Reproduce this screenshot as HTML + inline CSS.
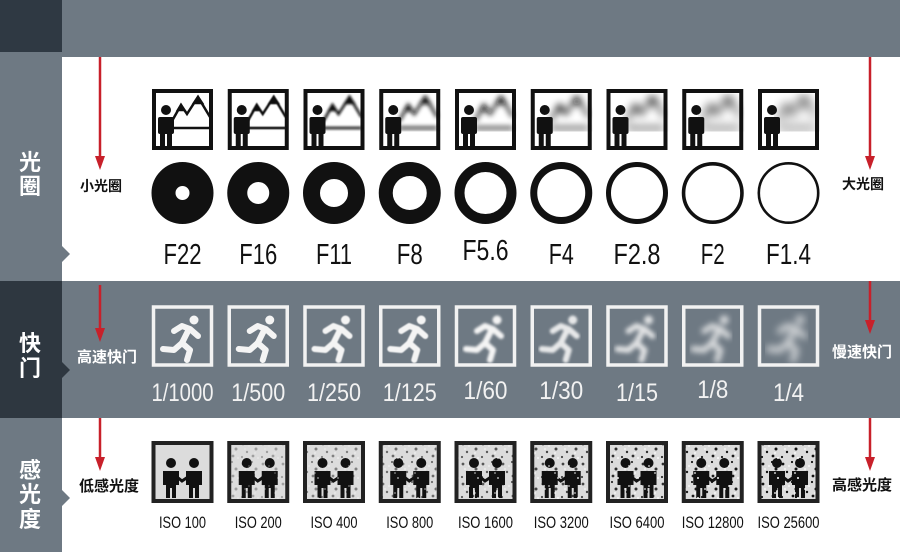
<!DOCTYPE html>
<html><head><meta charset="utf-8"><style>
html,body{margin:0;padding:0;background:#fff;}
svg{display:block}
</style></head><body>
<svg width="900" height="552" viewBox="0 0 900 552" xmlns="http://www.w3.org/2000/svg" font-family="'Liberation Sans','Noto Sans CJK SC',sans-serif">
<defs>
<filter id="b1"><feGaussianBlur stdDeviation="0.6"/></filter>
<filter id="b2"><feGaussianBlur stdDeviation="1.2"/></filter>
<filter id="b3"><feGaussianBlur stdDeviation="2"/></filter>
<filter id="b4"><feGaussianBlur stdDeviation="2.8"/></filter>
<filter id="b5"><feGaussianBlur stdDeviation="3.6"/></filter>
<filter id="b6"><feGaussianBlur stdDeviation="4.4"/></filter>
<filter id="b7"><feGaussianBlur stdDeviation="5"/></filter>
<filter id="b8"><feGaussianBlur stdDeviation="5.6"/></filter>
<g id="mtn" fill="none" stroke="#111" stroke-width="2.5">
<polyline points="20,32 29,16 35,25 46,8 58,28"/>
<polygon points="29,16 26,21 32,21" fill="#111"/>
<polygon points="46,8 42,14 50,14" fill="#111"/>
<line x1="20" y1="39" x2="58" y2="39"/>
</g>
<g id="person" fill="#111">
<circle cx="14" cy="21" r="5"/>
<rect x="6" y="28" width="16" height="17" rx="2"/>
<rect x="8" y="44" width="5" height="14"/>
<rect x="15" y="44" width="5" height="14"/>
</g>
<g id="runner" fill="none" stroke="#f4f4f4" stroke-width="6" stroke-linecap="round" stroke-linejoin="round">
<circle cx="42" cy="15" r="4.5" fill="#f4f4f4" stroke="none"/>
<polyline points="22,26 30,21 38,24 46,31"/>
<line x1="37" y1="24" x2="30" y2="38"/>
<polyline points="30,38 38,45 35,55"/>
<polyline points="30,38 22,45 11,44"/>
</g>
<g id="pair" fill="#111">
<circle cx="19" cy="22" r="5"/>
<path d="M11 30h16v14h-3v13h-4v-10h-2v10h-4v-13h-3z"/>
<circle cx="42" cy="22" r="5"/>
<path d="M34 30h16v14h-3v13h-4v-10h-2v10h-4v-13h-3z"/>
<path d="M25 36 L30 40 L36 36" stroke="#111" stroke-width="3" fill="none"/>
</g>
<pattern id="noise" width="20" height="20" patternUnits="userSpaceOnUse">
<circle cx="3" cy="4" r="1.4" fill="#111"/><circle cx="12" cy="2" r="1.1" fill="#111"/>
<circle cx="16" cy="9" r="1.5" fill="#111"/><circle cx="7" cy="12" r="1.2" fill="#111"/>
<circle cx="2" cy="17" r="1.1" fill="#111"/><circle cx="13" cy="16" r="1.4" fill="#111"/>
<circle cx="9" cy="6" r="0.9" fill="#fff"/><circle cx="18" cy="18" r="1" fill="#fff"/>
<circle cx="5" cy="9" r="0.9" fill="#fff"/><circle cx="15" cy="13" r="0.9" fill="#fff"/>
</pattern>
</defs>

<rect x="0" y="0" width="900" height="57" fill="#6e7983"/>
<rect x="0" y="0" width="62" height="52" fill="#2f3943"/>
<rect x="0" y="52" width="62" height="229" fill="#6e7983"/>
<rect x="62" y="57" width="838" height="224" fill="#fff"/>
<rect x="0" y="281" width="900" height="137" fill="#6e7983"/>
<rect x="0" y="281" width="62" height="137" fill="#2e3740"/>
<rect x="0" y="418" width="62" height="134" fill="#6e7983"/>
<rect x="62" y="418" width="838" height="134" fill="#fff"/>
<polygon points="62,246 70,254 62,262" fill="#6e7983"/>
<polygon points="62,362 70,370 62,378" fill="#2e3740"/>
<polygon points="62,490 70,498 62,506" fill="#6e7983"/>

<g fill="#fff" font-weight="bold" font-size="22" text-anchor="middle">
<text x="30" y="170">光</text><text x="30" y="194">圈</text>
<text x="30" y="351">快</text><text x="30" y="376">门</text>
<text x="30" y="478">感</text><text x="30" y="502">光</text><text x="30" y="527">度</text>
</g>

<g stroke="#c8202a" stroke-width="2.5" fill="#c8202a">
<line x1="100" y1="57" x2="100" y2="160"/><polygon points="95,156 105,156 100,170" stroke="none"/>
<line x1="870" y1="57" x2="870" y2="160"/><polygon points="865,156 875,156 870,170" stroke="none"/>
<line x1="100" y1="285" x2="100" y2="333"/><polygon points="95,328 105,328 100,342" stroke="none"/>
<line x1="870" y1="281" x2="870" y2="325"/><polygon points="865,320 875,320 870,334" stroke="none"/>
<line x1="100" y1="418" x2="100" y2="461"/><polygon points="95,457 105,457 100,471" stroke="none"/>
<line x1="870" y1="418" x2="870" y2="461"/><polygon points="865,457 875,457 870,471" stroke="none"/>
</g>
<g font-weight="bold" font-size="14" text-anchor="middle">
<text x="101" y="191" fill="#111">小光圈</text>
<text x="863" y="189" fill="#111">大光圈</text>
<text x="107" y="362" fill="#fff" font-size="15">高速快门</text>
<text x="862" y="357" fill="#fff" font-size="15">慢速快门</text>
<text x="109" y="491" fill="#111" font-size="15">低感光度</text>
<text x="862" y="490" fill="#111" font-size="15">高感光度</text>
</g>

<g transform="translate(152,89)"><rect x="2" y="2" width="57" height="57" fill="#fff" stroke="#111" stroke-width="4"/><use href="#mtn"/><use href="#person"/></g>
<g transform="translate(227.75,89)"><rect x="2" y="2" width="57" height="57" fill="#fff" stroke="#111" stroke-width="4"/><use href="#mtn" filter="url(#b1)"/><use href="#person"/></g>
<g transform="translate(303.5,89)"><rect x="2" y="2" width="57" height="57" fill="#fff" stroke="#111" stroke-width="4"/><use href="#mtn" filter="url(#b2)"/><use href="#person"/></g>
<g transform="translate(379.25,89)"><rect x="2" y="2" width="57" height="57" fill="#fff" stroke="#111" stroke-width="4"/><use href="#mtn" filter="url(#b3)"/><use href="#person"/></g>
<g transform="translate(455,89)"><rect x="2" y="2" width="57" height="57" fill="#fff" stroke="#111" stroke-width="4"/><use href="#mtn" filter="url(#b4)"/><use href="#person"/></g>
<g transform="translate(530.75,89)"><rect x="2" y="2" width="57" height="57" fill="#fff" stroke="#111" stroke-width="4"/><use href="#mtn" filter="url(#b5)"/><use href="#person"/></g>
<g transform="translate(606.5,89)"><rect x="2" y="2" width="57" height="57" fill="#fff" stroke="#111" stroke-width="4"/><use href="#mtn" filter="url(#b6)"/><use href="#person"/></g>
<g transform="translate(682.25,89)"><rect x="2" y="2" width="57" height="57" fill="#fff" stroke="#111" stroke-width="4"/><use href="#mtn" filter="url(#b7)"/><use href="#person"/></g>
<g transform="translate(758,89)"><rect x="2" y="2" width="57" height="57" fill="#fff" stroke="#111" stroke-width="4"/><use href="#mtn" filter="url(#b8)"/><use href="#person"/></g>

<g fill="none" stroke="#111">
<circle cx="182.5" cy="193" r="19" stroke-width="24"/>
<circle cx="258.25" cy="193" r="21" stroke-width="20"/>
<circle cx="334" cy="193" r="22.5" stroke-width="17"/>
<circle cx="409.75" cy="193" r="24" stroke-width="14"/>
<circle cx="485.5" cy="193" r="26" stroke-width="10"/>
<circle cx="561.25" cy="193" r="27.5" stroke-width="7"/>
<circle cx="637" cy="193" r="28.5" stroke-width="5"/>
<circle cx="712.75" cy="193" r="29.2" stroke-width="3.6"/>
<circle cx="788.5" cy="193" r="29.7" stroke-width="2.6"/>
</g>
<g font-size="29" fill="#111" text-anchor="middle" lengthAdjust="spacingAndGlyphs">
<text x="182.5" y="264" textLength="38" lengthAdjust="spacingAndGlyphs">F22</text>
<text x="258.25" y="264" textLength="38" lengthAdjust="spacingAndGlyphs">F16</text>
<text x="334" y="264" textLength="36" lengthAdjust="spacingAndGlyphs">F11</text>
<text x="409.75" y="264" textLength="26" lengthAdjust="spacingAndGlyphs">F8</text>
<text x="485.5" y="260" textLength="46" lengthAdjust="spacingAndGlyphs">F5.6</text>
<text x="561.25" y="264" textLength="25" lengthAdjust="spacingAndGlyphs">F4</text>
<text x="637" y="264" textLength="47" lengthAdjust="spacingAndGlyphs">F2.8</text>
<text x="712.75" y="264" textLength="24" lengthAdjust="spacingAndGlyphs">F2</text>
<text x="788.5" y="264" textLength="45" lengthAdjust="spacingAndGlyphs">F1.4</text>
</g>

<g fill="none" stroke="#f2f2f2" stroke-width="3.5">
<rect x="153.5" y="307" width="58" height="58"/><rect x="229.25" y="307" width="58" height="58"/>
<rect x="305" y="307" width="58" height="58"/><rect x="380.75" y="307" width="58" height="58"/>
<rect x="456.5" y="307" width="58" height="58"/><rect x="532.25" y="307" width="58" height="58"/>
<rect x="608" y="307" width="58" height="58"/><rect x="683.75" y="307" width="58" height="58"/>
<rect x="759.5" y="307" width="58" height="58"/>
</g>
<use href="#runner" transform="translate(152,305)"/>
<use href="#runner" transform="translate(227.75,305)"/>
<use href="#runner" transform="translate(303.5,305)" filter="url(#b1)"/>
<use href="#runner" transform="translate(379.25,305)" filter="url(#b1)"/>
<use href="#runner" transform="translate(455,305)" filter="url(#b2)"/>
<use href="#runner" transform="translate(530.75,305)" filter="url(#b2)" opacity="0.9"/>
<use href="#runner" transform="translate(606.5,305)" filter="url(#b3)" opacity="0.85"/>
<use href="#runner" transform="translate(682.25,305)" filter="url(#b4)" opacity="0.8"/>
<use href="#runner" transform="translate(758,305)" filter="url(#b5)" opacity="0.75"/>
<g font-size="25" fill="#f2f2f2" text-anchor="middle">
<text x="182.5" y="401" textLength="62" lengthAdjust="spacingAndGlyphs">1/1000</text>
<text x="258.25" y="401" textLength="54" lengthAdjust="spacingAndGlyphs">1/500</text>
<text x="334" y="401" textLength="54" lengthAdjust="spacingAndGlyphs">1/250</text>
<text x="409.75" y="401" textLength="54" lengthAdjust="spacingAndGlyphs">1/125</text>
<text x="485.5" y="399" textLength="44" lengthAdjust="spacingAndGlyphs">1/60</text>
<text x="561.25" y="399" textLength="44" lengthAdjust="spacingAndGlyphs">1/30</text>
<text x="637" y="401" textLength="42" lengthAdjust="spacingAndGlyphs">1/15</text>
<text x="712.75" y="398" textLength="31" lengthAdjust="spacingAndGlyphs">1/8</text>
<text x="788.5" y="401" textLength="31" lengthAdjust="spacingAndGlyphs">1/4</text>
</g>

<g stroke="#222" stroke-width="4" fill="#dcdcdc">
<rect x="153.5" y="443" width="58" height="58"/><rect x="229.25" y="443" width="58" height="58"/>
<rect x="305" y="443" width="58" height="58"/><rect x="380.75" y="443" width="58" height="58"/>
<rect x="456.5" y="443" width="58" height="58"/><rect x="532.25" y="443" width="58" height="58"/>
<rect x="608" y="443" width="58" height="58"/><rect x="683.75" y="443" width="58" height="58"/>
<rect x="759.5" y="443" width="58" height="58"/>
</g>
<g>
<use href="#pair" transform="translate(152,441)"/>
<use href="#pair" transform="translate(227.75,441)"/><rect x="231" y="445" width="54" height="54" fill="url(#noise)" opacity="0.3"/>
<use href="#pair" transform="translate(303.5,441)"/><rect x="307" y="445" width="54" height="54" fill="url(#noise)" opacity="0.45"/>
<use href="#pair" transform="translate(379.25,441)"/><rect x="382.5" y="445" width="54" height="54" fill="url(#noise)" opacity="0.55"/>
<use href="#pair" transform="translate(455,441)"/><rect x="458.5" y="445" width="54" height="54" fill="url(#noise)" opacity="0.65"/>
<use href="#pair" transform="translate(530.75,441)"/><rect x="534" y="445" width="54" height="54" fill="url(#noise)" opacity="0.75"/>
<use href="#pair" transform="translate(606.5,441)"/><rect x="610" y="445" width="54" height="54" fill="url(#noise)" opacity="0.85"/>
<use href="#pair" transform="translate(682.25,441)"/><rect x="685.5" y="445" width="54" height="54" fill="url(#noise)" opacity="0.95"/>
<use href="#pair" transform="translate(758,441)"/><rect x="761.5" y="445" width="54" height="54" fill="url(#noise)"/>
</g>
<g font-size="17" fill="#111" text-anchor="middle">
<text x="182.5" y="528" textLength="47" lengthAdjust="spacingAndGlyphs">ISO 100</text>
<text x="258.25" y="528" textLength="47" lengthAdjust="spacingAndGlyphs">ISO 200</text>
<text x="334" y="528" textLength="47" lengthAdjust="spacingAndGlyphs">ISO 400</text>
<text x="409.75" y="528" textLength="47" lengthAdjust="spacingAndGlyphs">ISO 800</text>
<text x="485.5" y="528" textLength="55" lengthAdjust="spacingAndGlyphs">ISO 1600</text>
<text x="561.25" y="528" textLength="55" lengthAdjust="spacingAndGlyphs">ISO 3200</text>
<text x="637" y="528" textLength="55" lengthAdjust="spacingAndGlyphs">ISO 6400</text>
<text x="712.75" y="528" textLength="62" lengthAdjust="spacingAndGlyphs">ISO 12800</text>
<text x="788.5" y="528" textLength="62" lengthAdjust="spacingAndGlyphs">ISO 25600</text>
</g>
</svg>
</body></html>
